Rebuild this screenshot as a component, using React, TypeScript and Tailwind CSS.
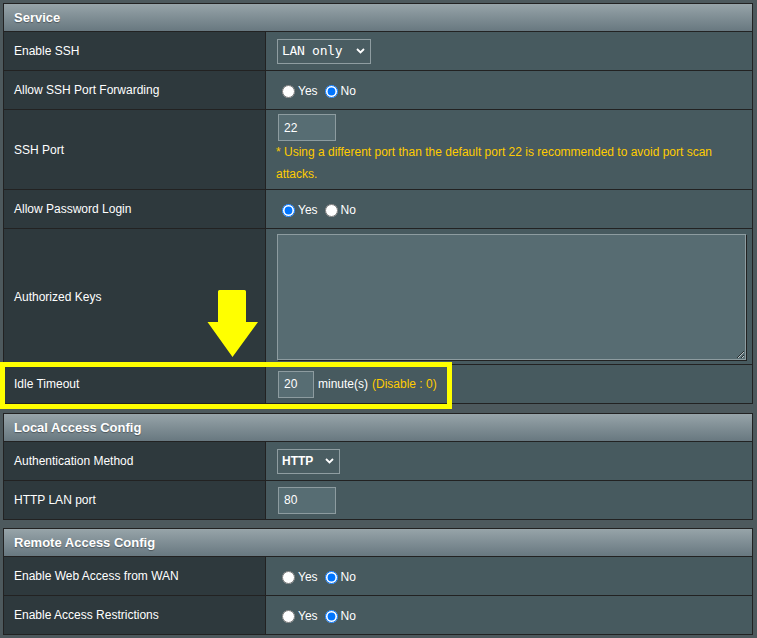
import React from "react";

function Header({ title }: { title: string }) {
  return (
    <div className="h-[27px] flex items-center pl-[10px] bg-gradient-to-b from-[#97a4a9] to-[#687880] text-white font-bold text-[13px] [text-shadow:0_1px_1px_rgba(0,0,0,0.35)]">
      {title}
    </div>
  );
}

function Row({
  label,
  h = "h-[39px]",
  col = false,
  children,
}: {
  label: string;
  h?: string;
  col?: boolean;
  children?: React.ReactNode;
}) {
  return (
    <div className={`grid grid-cols-[261px_1fr] border-t border-[#222] ${h}`}>
      <div className="bg-[#2e393d] flex items-center pl-[10px] text-[12px] text-white">{label}</div>
      <div
        className={`bg-[#475a5f] border-l border-[#222] pl-[11px] ${
          col ? "flex flex-col items-start pt-[4px]" : "flex items-center"
        }`}
      >
        {children}
      </div>
    </div>
  );
}

function Radio({ name, yes }: { name: string; yes: boolean }) {
  return (
    <div className="flex items-center text-[12px] text-white pt-[2px]">
      <input type="radio" name={name} defaultChecked={yes} className="m-0 ml-[5px] mr-[3px] w-[13px] h-[13px]" />
      <span>Yes</span>
      <input type="radio" name={name} defaultChecked={!yes} className="m-0 ml-[7px] mr-[3px] w-[13px] h-[13px]" />
      <span>No</span>
    </div>
  );
}

function Chevron() {
  return (
    <svg width="9" height="6" viewBox="0 0 9 6" className="shrink-0">
      <path d="M1 1 L4.5 4.5 L8 1" fill="none" stroke="#ffffff" strokeWidth="1.8" />
    </svg>
  );
}

function Table({ title, mb, children }: { title: string; mb: string; children: React.ReactNode }) {
  return (
    <div className={`w-[750px] border border-[#222] ${mb}`}>
      <Header title={title} />
      {children}
    </div>
  );
}

function NumInput({ value, w }: { value: string; w: string }) {
  return (
    <div
      className={`${w} h-[27px] ml-[1px] bg-[#576d73] border border-[#8d9ca0] flex items-center pl-[5px] text-[12px] text-white`}
    >
      {value}
    </div>
  );
}

export default function App() {
  return (
    <div className="relative w-[757px] h-[638px] overflow-hidden bg-[#4d595d] pt-[3px] pl-[3px] font-['Liberation_Sans',Arial,sans-serif] text-white text-[12px]">
      <Table title="Service" mb="mb-[9px]">
        <Row label="Enable SSH">
          <div className="w-[94px] h-[25px] border border-[#8f9da1] bg-[#4a5d62] flex items-center justify-between pl-[4px] pr-[5px] text-[13px] font-['DejaVu_Sans_Mono',monospace] tracking-[-0.3px]">
            <span>LAN only</span>
            <Chevron />
          </div>
        </Row>
        <Row label="Allow SSH Port Forwarding">
          <Radio name="fwd" yes={false} />
        </Row>
        <Row label="SSH Port" h="h-[80px]" col>
          <NumInput value="22" w="w-[58px]" />
          <div className="text-[#ffcc00] text-[12px] leading-[22px] -ml-[1px] w-[464px]">
            * Using a different port than the default port 22 is recommended to avoid port scan attacks.
          </div>
        </Row>
        <Row label="Allow Password Login">
          <Radio name="pw" yes={true} />
        </Row>
        <Row label="Authorized Keys" h="h-[136px]">
          <textarea
            className="w-[469px] h-[126px] bg-[#576c72] border border-[#8d9ca0] shadow-[1px_1px_0_#222] resize outline-none"
            defaultValue=""
          />
        </Row>
        <Row label="Idle Timeout">
          <NumInput value="20" w="w-[36px]" />
          <span className="ml-[4px]">minute(s)</span>
          <span className="ml-[4px] text-[#ffcc00]">(Disable : 0)</span>
        </Row>
      </Table>

      <Table title="Local Access Config" mb="mb-[8px]">
        <Row label="Authentication Method">
          <div className="w-[63px] h-[25px] border border-[#8f9da1] bg-[#4a5d62] flex items-center justify-between pl-[4px] pr-[5px] text-[12px] font-bold">
            <span>HTTP</span>
            <Chevron />
          </div>
        </Row>
        <Row label="HTTP LAN port">
          <NumInput value="80" w="w-[58px]" />
        </Row>
      </Table>

      <Table title="Remote Access Config" mb="mb-0">
        <Row label="Enable Web Access from WAN">
          <Radio name="wan" yes={false} />
        </Row>
        <Row label="Enable Access Restrictions">
          <Radio name="restrict" yes={false} />
        </Row>
      </Table>

      <div className="absolute left-0 top-[362px] w-[452px] h-[47px] border-[5px] border-[#ffff00]" />
      <svg className="absolute left-[207px] top-[290px]" width="52" height="68" viewBox="0 0 52 68">
        <path d="M11 1.5 Q11 0 12.5 0 H37.5 Q39 0 39 1.5 V32 H51 L25.5 67 L0.5 32 H11 Z" fill="#ffff00" />
      </svg>
    </div>
  );
}
